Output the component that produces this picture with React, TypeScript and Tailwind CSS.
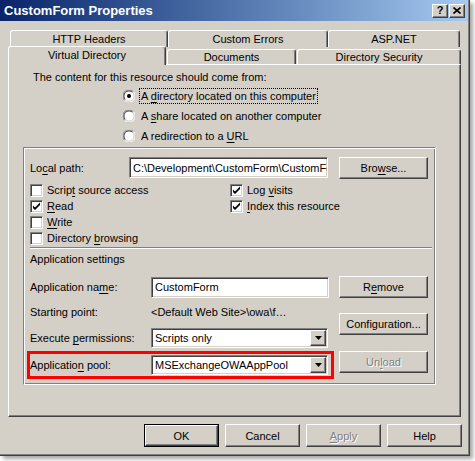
import React from 'react';

// Windows classic "CustomForm Properties" dialog

const raised =
  'bg-[#d4d0c8] border border-t-white border-l-white border-r-[#404040] border-b-[#404040] shadow-[inset_-1px_-1px_0_#808080,inset_1px_1px_0_#d4d0c8]';
const sunken =
  'bg-white border border-t-[#808080] border-l-[#808080] border-r-white border-b-white shadow-[inset_1px_1px_0_#404040,inset_-1px_-1px_0_#d4d0c8]';

const U: React.FC<{ children: React.ReactNode }> = ({ children }) => <span className="underline underline-offset-2">{children}</span>;

const Button: React.FC<{ className: string; disabled?: boolean; isDefault?: boolean; children: React.ReactNode }> = ({
  className,
  disabled,
  isDefault,
  children,
}) => (
  <div className={`${className} ${isDefault ? 'border border-black' : ''} shrink-0`}>
    <div
      className={`${raised} w-full h-full flex items-center justify-center ${
        disabled ? 'text-[#808080] [text-shadow:1px_1px_0_#fff]' : 'text-black'
      }`}
    >
      {children}
    </div>
  </div>
);

const ArrowBtn: React.FC = () => (
  <div className={`${raised} w-[16px] h-full flex items-center justify-center shrink-0`}>
    <svg width="7" height="4" viewBox="0 0 7 4">
      <path d="M0 0h7L3.5 4z" fill="#000" />
    </svg>
  </div>
);

const Select: React.FC<{ value: string }> = ({ value }) => (
  <div className={`${sunken} w-[177px] h-[20px] flex items-stretch p-px`}>
    <div className="flex-1 pl-[2px] flex items-center">{value}</div>
    <ArrowBtn />
  </div>
);

const Check: React.FC<{ checked?: boolean }> = ({ checked }) => (
  <div className={`${sunken} w-[13px] h-[13px] shrink-0 relative`}>
    {checked && (
      <svg width="13" height="13" viewBox="0 0 13 13" className="absolute -left-px -top-px">
        <path d="M3 5.5v2.5l2 2l5-5v-2.5l-5 5z" fill="#000" />
      </svg>
    )}
  </div>
);

const Radio: React.FC<{ checked?: boolean }> = ({ checked }) => (
  <svg width="12" height="12" viewBox="0 0 12 12" className="shrink-0">
    <circle cx="6" cy="6" r="5.5" fill="#fff" />
    <path d="M1.6 10.4A5.5 5.5 0 0 1 10.4 1.6" stroke="#808080" strokeWidth="1" fill="none" />
    <path d="M2.4 9.6A4.5 4.5 0 0 1 9.6 2.4" stroke="#404040" strokeWidth="1" fill="none" />
    <path d="M10.4 1.6A5.5 5.5 0 0 1 1.6 10.4" stroke="#fff" strokeWidth="1" fill="none" />
    <path d="M9.6 2.4A4.5 4.5 0 0 1 2.4 9.6" stroke="#d4d0c8" strokeWidth="1" fill="none" />
    {checked && <circle cx="6" cy="6" r="2" fill="#000" />}
  </svg>
);

const Tab: React.FC<{ className: string; children: React.ReactNode }> = ({ className, children }) => (
  <div
    className={`${className} bg-[#d4d0c8] border-t border-l border-t-white border-l-white border-r border-r-[#404040] shadow-[inset_-1px_0_0_#808080] rounded-t-[3px] flex items-center justify-center shrink-0`}
  >
    {children}
  </div>
);

const CheckRow: React.FC<{ checked?: boolean; children: React.ReactNode }> = ({ checked, children }) => (
  <div className="h-[16px] flex items-center gap-[4px]">
    <Check checked={checked} />
    <span>{children}</span>
  </div>
);

const RadioRow: React.FC<{ checked?: boolean; focus?: boolean; children: React.ReactNode }> = ({ checked, focus, children }) => (
  <div className="h-[20px] flex items-center gap-[5px]">
    <Radio checked={checked} />
    <span className={focus ? 'outline outline-1 outline-dotted outline-black px-px leading-[14px]' : 'px-px'}>{children}</span>
  </div>
);

export default function App() {
  return (
    <div className="w-[475px] h-[461px] bg-white overflow-hidden font-['Tahoma','Liberation_Sans',Arial,sans-serif] text-[11px] leading-[14px] text-black">
      <div className="w-[470px] h-[456px] bg-[#d4d0c8] border-r border-b border-r-[#404040] border-b-[#404040] shadow-[inset_-1px_-1px_0_#808080,3px_3px_4px_rgba(0,0,0,0.35)] flex flex-col">
        {/* Title bar */}
        <div className="h-[21px] mr-[1px] bg-gradient-to-r from-[#0a246a] to-[#a6caf0] flex items-center pl-[4px] pr-[3px]">
          <span className="text-white font-bold text-[13px] flex-1">CustomForm Properties</span>
          <div className="flex gap-[1px]">
            <div className={`${raised} w-[16px] h-[14px] flex items-center justify-center font-bold text-[11px] leading-none`}>?</div>
            <div className={`${raised} w-[16px] h-[14px] flex items-center justify-center`}>
              <svg width="8" height="7" viewBox="0 0 8 7">
                <path d="M0.5 0.5l7 6M7.5 0.5l-7 6" stroke="#000" strokeWidth="1.6" />
              </svg>
            </div>
          </div>
        </div>

        {/* Tabs */}
        <div className="mt-[9px] ml-[10px] flex h-[17px]">
          <Tab className="w-[158px] h-[17px]">HTTP Headers</Tab>
          <Tab className="w-[160px] h-[17px]">Custom Errors</Tab>
          <Tab className="w-[132px] h-[17px]">ASP.NET</Tab>
        </div>
        <div className="ml-[10px] flex items-end h-[17px]">
          <Tab className="w-[158px] h-[19px] pb-[3px] relative z-10 -mb-px -ml-[2px] mr-[1px]">Virtual Directory</Tab>
          <Tab className="w-[129px] h-[15px]">Documents</Tab>
          <Tab className="w-[164px] h-[15px] ml-[1px]">Directory Security</Tab>
        </div>

        {/* Panel */}
        <div className="ml-[8px] w-[453px] h-[353px] border border-t-white border-l-white border-r-[#404040] border-b-[#404040] shadow-[inset_-1px_-1px_0_#808080] flex flex-col">
          <div className="mt-[5px] ml-[24px]">The content for this resource should come from:</div>
          <div className="mt-[2px] ml-[114px] flex flex-col">
            <RadioRow checked focus>
              A <U>d</U>irectory located on this computer
            </RadioRow>
            <RadioRow>
              A <U>s</U>hare located on another computer
            </RadioRow>
            <RadioRow>
              A redirection to a <U>U</U>RL
            </RadioRow>
          </div>

          {/* Group box */}
          <div className="mt-[1px] ml-[14px] w-[413px] h-[238px] border border-t-[#808080] border-l-[#808080] border-r-white border-b-white shadow-[inset_1px_1px_0_#fff,inset_-1px_-1px_0_#808080] flex flex-col pl-[6px]">
            <div className="mt-[9px] h-[22px] flex items-start">
              <div className="w-[99px] h-[21px] flex items-center">
                Lo<U>c</U>al path:
              </div>
              <div className={`${sunken} w-[199px] h-[21px] flex items-center pl-[3px] overflow-hidden whitespace-nowrap`}>
                C:\Development\CustomForm\CustomFo
              </div>
              <Button className="ml-[11px] w-[89px] h-[22px]">
                Bro<U>w</U>se...
              </Button>
            </div>

            <div className="mt-[3px] grid grid-cols-[200px_1fr]">
              <CheckRow>
                Scrip<U>t</U> source access
              </CheckRow>
              <CheckRow checked>
                Log <U>v</U>isits
              </CheckRow>
              <CheckRow checked>
                <U>R</U>ead
              </CheckRow>
              <CheckRow checked>
                <U>I</U>ndex this resource
              </CheckRow>
              <CheckRow>
                <U>W</U>rite
              </CheckRow>
              <div />
              <CheckRow>
                Directory <U>b</U>rowsing
              </CheckRow>
            </div>

            <div className="mt-[1px] w-[402px] border-t border-b border-t-[#808080] border-b-white" />
            <div className="mt-[3px]">Application settings</div>

            <div className="mt-[10px] flex items-start">
              <div className="w-[299px] flex flex-col">
                <div className="h-[22px] flex items-center">
                  <div className="w-[121px]">
                    Application na<U>m</U>e:
                  </div>
                  <div className={`${sunken} w-[178px] h-[21px] flex items-center pl-[3px]`}>CustomForm</div>
                </div>
                <div className="mt-[6px] h-[16px] flex items-center">
                  <div className="w-[121px]">Starting point:</div>
                  <div>&lt;Default Web Site&gt;\owa\f…</div>
                </div>
                <div className="mt-[8px] h-[20px] flex items-center">
                  <div className="w-[121px]">
                    Execute <U>p</U>ermissions:
                  </div>
                  <Select value="Scripts only" />
                </div>
                <div className="mt-[3px] -ml-[3px] w-[307px] h-[28px] border-[3px] border-[#ff0000] flex items-center">
                  <div className="w-[121px]">
                    Applicatio<U>n</U> pool:
                  </div>
                  <Select value="MSExchangeOWAAppPool" />
                </div>
              </div>
              <div className="ml-[10px] flex flex-col">
                <Button className="w-[89px] h-[22px]">
                  R<U>e</U>move
                </Button>
                <Button className="mt-[15px] w-[89px] h-[22px]">Configuration...</Button>
                <Button className="mt-[16px] w-[89px] h-[22px]" disabled>
                  Un<U>l</U>oad
                </Button>
              </div>
            </div>
          </div>
        </div>

        {/* Bottom buttons */}
        <div className="mt-[7px] ml-[144px] flex gap-[6px]">
          <Button className="w-[75px] h-[23px]" isDefault>
            OK
          </Button>
          <Button className="w-[75px] h-[23px]">Cancel</Button>
          <Button className="w-[75px] h-[23px]" disabled>
            <U>A</U>pply
          </Button>
          <Button className="w-[75px] h-[23px]">Help</Button>
        </div>
      </div>
    </div>
  );
}
